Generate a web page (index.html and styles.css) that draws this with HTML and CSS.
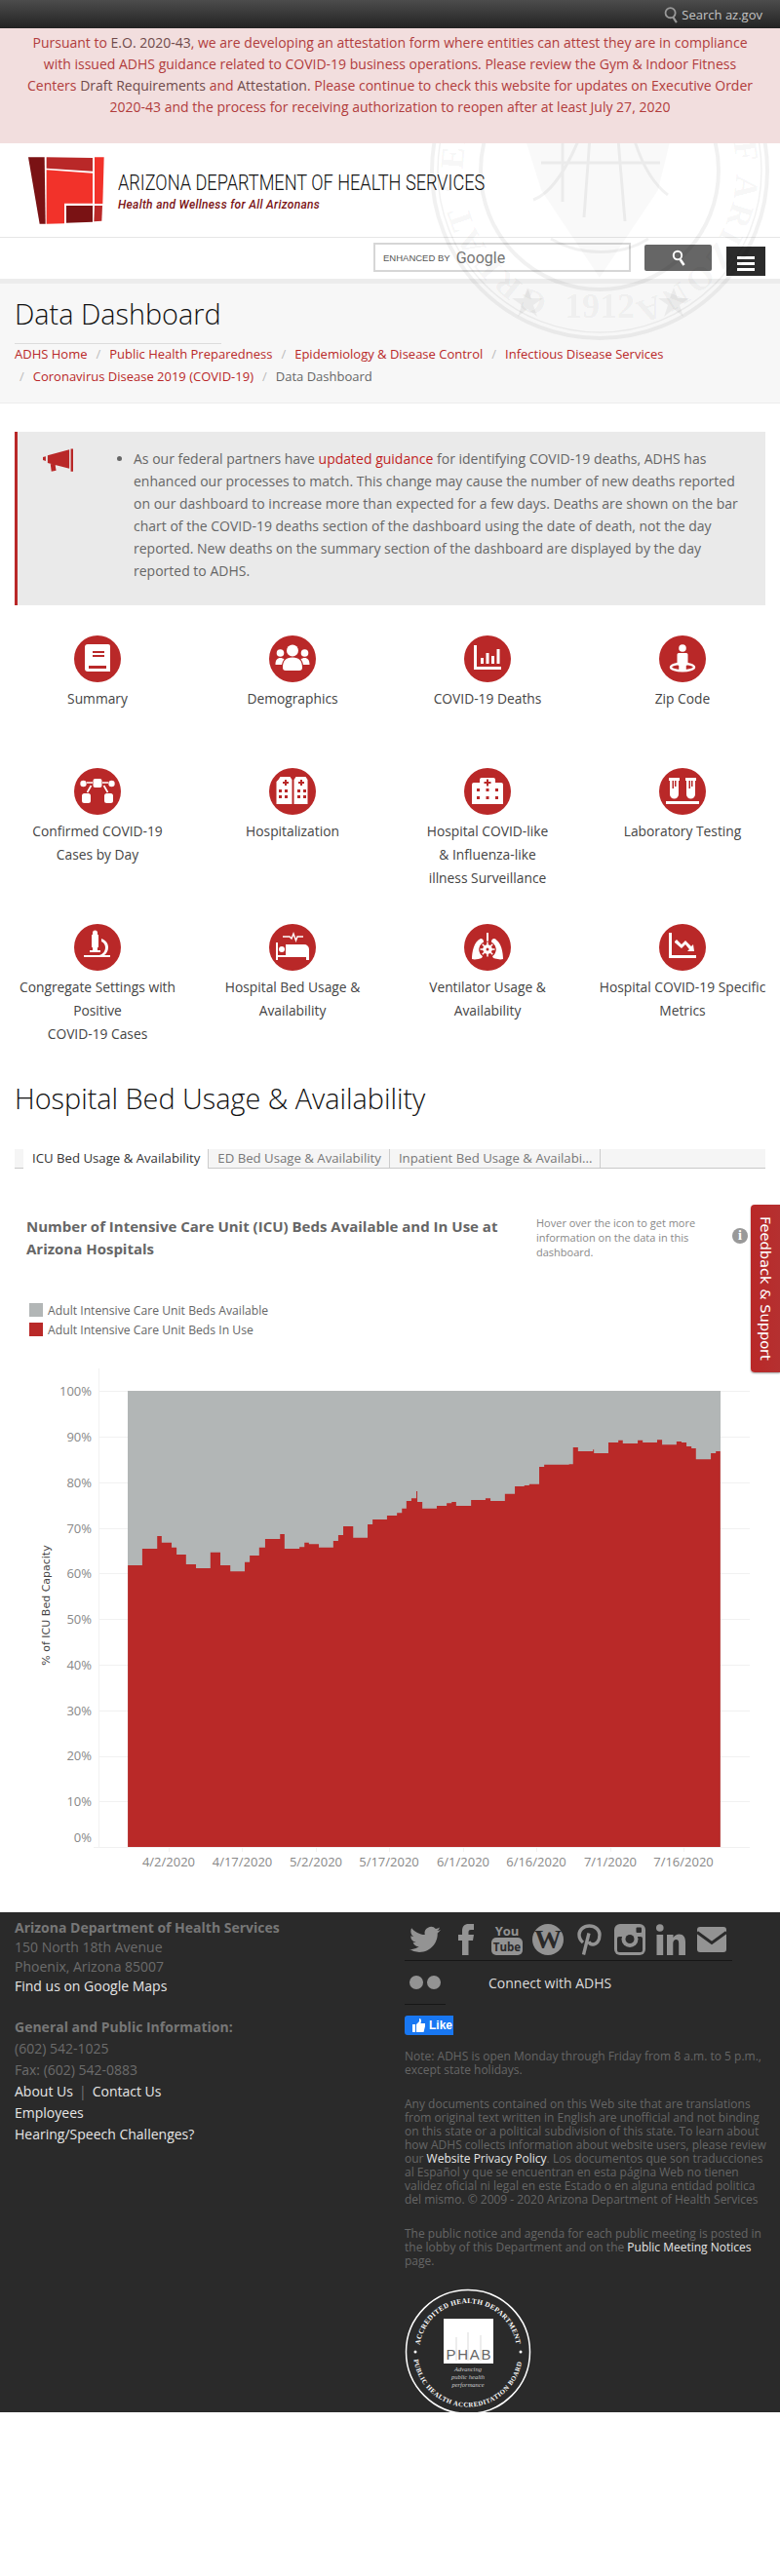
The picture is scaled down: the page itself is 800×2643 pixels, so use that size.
FILE: index.html
```html
<!DOCTYPE html>
<html lang="en">
<head>
    <meta charset="UTF-8">
    <title>Data Dashboard</title>
    <link rel="stylesheet" href="styles.css">
</head>
<body>
<div class="page">

    <div class="topbar">
        <svg class="topbar-icon" viewBox="0 0 16 20"><circle cx="7" cy="8" r="5.6" fill="none" stroke="#999" stroke-width="2"/><path d="M10 13l4 6" stroke="#999" stroke-width="2.4"/></svg>
        <span>Search az.gov</span>
    </div>

    <div class="alert">
        Pursuant to <a>E.O. 2020-43</a>, we are developing an attestation form where entities can attest they are in compliance<br>
        with issued ADHS guidance related to COVID-19 business operations. Please review the Gym &amp; Indoor Fitness<br>
        Centers <a>Draft Requirements</a> and <a>Attestation</a>. Please continue to check this website for updates on Executive Order<br>
        2020-43 and the process for receiving authorization to reopen after at least July 27, 2020
    </div>

    <div class="brand">
        <div class="masthead">
            <svg class="logo" viewBox="87 93 234 207">
                <polygon fill="#7a1214" points="87,94 137,94 140,299 122,299"/>
                <polygon fill="#b92828" points="143,94 285,96 285,137 143,128"/>
                <polygon fill="#f2322a" points="143,133 285,143 285,236 198,236 198,298 143,299"/>
                <polygon fill="#7a1214" points="204,243 285,243 285,293 204,296"/>
                <polygon fill="#f2322a" points="291,94 320,94 316,237 291,237"/>
                <polygon fill="#b92828" points="291,243 315,243 313,290 289,292"/>
            </svg>
            <div class="wordmark">
                <div class="wordmark-name">ARIZONA DEPARTMENT OF HEALTH SERVICES</div>
                <div class="wordmark-tag">Health and Wellness for All Arizonans</div>
            </div>
        </div>

        <div class="searchrow">
            <div class="gsearch"><span class="gsearch-by">ENHANCED BY</span><span class="gsearch-logo">Google</span></div>
            <div class="gbutton"><svg width="14" height="18" viewBox="0 0 14 18"><circle cx="6" cy="6" r="4.2" fill="none" stroke="#fff" stroke-width="2"/><path d="M8.5 10l4 6" stroke="#fff" stroke-width="2.6"/></svg></div>
            <div class="burger"><i></i><i></i><i></i></div>
        </div>

        <div class="titlearea">
            <h1>Data Dashboard</h1>
            <div class="crumbs">
                <a>ADHS Home</a><s>/</s><a>Public Health Preparedness</a><s>/</s><a>Epidemiology &amp; Disease Control</a><s>/</s><a>Infectious Disease Services</a><br>
                <s class="first">/</s><a>Coronavirus Disease 2019 (COVID-19)</a><s>/</s><span>Data Dashboard</span>
            </div>
        </div>

        <!-- faint state seal behind the header -->
        <svg class="seal" viewBox="0 0 360 360">
            <defs><path id="sealArc" d="M180 320a140 140 0 1 1 .1 0"/></defs>
            <g fill="none" stroke="#000" stroke-opacity=".055">
                <circle cx="180" cy="180" r="172" stroke-width="4"/>
                <circle cx="180" cy="180" r="166" stroke-width="1.5"/>
                <circle cx="180" cy="180" r="122" stroke-width="4"/>
                <path stroke-width="3" d="M98 150l40-60 24 26 26-44 34 38 38 24M112 210c22-8 38-40 50-70M250 205c-16-12-28-34-36-62M130 250c30 18 72 18 100 0M142 120v92M172 118l-8 110M196 112l10 120M120 172h122"/>
            </g>
            <text class="seal-ring"><textPath href="#sealArc" startOffset="6%" textLength="790">GREAT SEAL OF THE STATE OF ARIZONA</textPath></text>
            <g fill="#000" fill-opacity=".05">
                <polygon fill-opacity=".025" points="95,120 130,70 160,90 190,55 225,85 262,110 240,200 180,290 120,200"/>
                <text class="seal-year" x="180" y="331" text-anchor="middle">1912</text>
                <polygon points="106,300 110,311 122,311 112,318 116,330 106,322 96,330 100,318 90,311 102,311"/>
                <polygon points="256,300 260,311 272,311 262,318 266,330 256,322 246,330 250,318 240,311 252,311"/>
            </g>
        </svg>
    </div>

    <div class="notice">
        <svg class="notice-icon" viewBox="0 0 32 24"><path fill="#b92828" d="M0 9l3-1v5l-3-1zM5 7L28 1v20L5 15zM8 16l5 1 1 6-5 1zM29.500 0H32v24h-2.500z"/></svg>
        <ul>
            <li>As our federal partners have <a>updated guidance</a> for identifying COVID-19 deaths, ADHS has enhanced our processes to match. This change may cause the number of new deaths reported on our dashboard to increase more than expected for a few days. Deaths are shown on the bar chart of the COVID-19 deaths section of the dashboard using the date of death, not the day reported. New deaths on the summary section of the dashboard are displayed by the day reported to ADHS.</li>
        </ul>
    </div>

    <div class="tiles">
        <div class="tile">
            <svg viewBox="0 0 48 48"><circle cx="24" cy="24" r="24" fill="#b92828"/><path fill="#fff" d="M14 9h21a2 2 0 0 1 2 2v26H14a3 3 0 0 1-3-3V12a3 3 0 0 1 3-3z"/><path fill="#b92828" d="M19 16h12v2H19zM19 20h12v2H19zM15 31h18v3H15z"/></svg>
            <p>Summary</p>
        </div>
        <div class="tile">
            <svg viewBox="0 0 48 48"><circle cx="24" cy="24" r="24" fill="#b92828"/><g fill="#fff"><circle cx="24" cy="15.500" r="6"/><circle cx="11.500" cy="18" r="3.800"/><circle cx="36.500" cy="18" r="3.800"/><path d="M6.500 30c0-5 2-7 5-7 1.500 0 3 .5 4 1.500-1.500 1.500-2 3.500-2.500 5.500zM41.500 30c0-5-2-7-5-7-1.500 0-3 .5-4 1.500 1.500 1.500 2 3.500 2.500 5.500zM14 33c0-7 3-10.500 10-10.500S34 26 34 33c0 2-1 3-3 3H17c-2 0-3-1-3-3z"/></g></svg>
            <p>Demographics</p>
        </div>
        <div class="tile">
            <svg viewBox="0 0 48 48"><circle cx="24" cy="24" r="24" fill="#b92828"/><path fill="#fff" d="M10 10h3v22h25v3H10zM17 23h3v6h-3zM22.500 18h3v11h-3zM28 21h3v8h-3zM33.500 14h3v15h-3z"/></svg>
            <p>COVID-19 Deaths</p>
        </div>
        <div class="tile">
            <svg viewBox="0 0 48 48"><circle cx="24" cy="24" r="24" fill="#b92828"/><g fill="#fff"><circle cx="24" cy="13" r="3.800"/><path d="M20 18h8a1.500 1.500 0 0 1 1.500 1.500V30l-2 1v6h-7v-6l-2-1V19.500A1.500 1.500 0 0 1 20 18z"/></g><ellipse cx="24" cy="32.500" rx="12" ry="3.800" fill="none" stroke="#fff" stroke-width="2.400"/><path fill="#fff" d="M20.500 28h7v8h-7z"/></svg>
            <p>Zip Code</p>
        </div>

        <div class="tile">
            <svg viewBox="0 0 48 48"><circle cx="24" cy="24" r="24" fill="#b92828"/><g fill="#fff"><rect x="19.500" y="11" width="9" height="9" rx="2"/><circle cx="9.500" cy="16" r="3.200"/><circle cx="38.500" cy="16" r="3.200"/><rect x="8" y="26" width="9" height="10" rx="2.500"/><rect x="31" y="26" width="9" height="10" rx="2.500"/></g><path fill="none" stroke="#fff" stroke-width="1.700" d="M13 15h6M35 15h-6M17.500 18l-4 7M30.500 18l4 7"/></svg>
            <p>Confirmed COVID-19<br>Cases by Day</p>
        </div>
        <div class="tile">
            <svg viewBox="0 0 48 48"><circle cx="24" cy="24" r="24" fill="#b92828"/><path fill="#fff" d="M9 12l2-3h10l2 3v25H7V14zM25 12l2-3h10l2 3v25H25z" transform="translate(.5)"/><path fill="#b92828" d="M14 14h2v-2h2v2h2v2h-2v2h-2v-2h-2zM30 14h2v-2h2v2h2v2h-2v2h-2v-2h-2zM10 22h3v3h-3zM16 22h3v3h-3zM10 28h3v3h-3zM16 28h3v3h-3zM29 22h3v3h-3zM35 22h3v3h-3zM29 28h3v3h-3zM35 28h3v3h-3z"/></svg>
            <p>Hospitalization</p>
        </div>
        <div class="tile">
            <svg viewBox="0 0 48 48"><circle cx="24" cy="24" r="24" fill="#b92828"/><path fill="#fff" d="M16 12a2 2 0 0 1 2-2h12a2 2 0 0 1 2 2v3h6a2 2 0 0 1 2 2v20H8V17a2 2 0 0 1 2-2h6z"/><path fill="#b92828" d="M23 11.500h2v2.500h2.500v2H25v2.500h-2V16h-2.500v-2H23zM13 21h3v3h-3zM22.500 21h3v3h-3zM32 21h3v3h-3zM13 29h3v3h-3zM22.500 29h3v3h-3zM32 29h3v3h-3z"/></svg>
            <p>Hospital COVID-like<br>&amp; Influenza-like<br>illness Surveillance</p>
        </div>
        <div class="tile">
            <svg viewBox="0 0 48 48"><circle cx="24" cy="24" r="24" fill="#b92828"/><path fill="#fff" d="M10 10h11v3h-1v14a4.500 4.500 0 0 1-9 0V13h-1zM27 10h11v3h-1v14a4.500 4.500 0 0 1-9 0V13h-1zM7 34h34v3H7z"/><path fill="#b92828" d="M13.500 13h1.500v8h-1.500zM16 13h1.500v6H16zM30.500 13H32v8h-1.500zM33 13h1.500v6H33z"/></svg>
            <p>Laboratory Testing</p>
        </div>

        <div class="tile">
            <svg viewBox="0 0 48 48"><circle cx="24" cy="24" r="24" fill="#b92828"/><path fill="#fff" d="M19 9a2.500 2.500 0 0 1 5 0v2h1v13h-1v3h-5v-3h-1V11h1zM28 15c4.500 1.500 7 5 7 9 0 3.500-1.500 6-4 8h6v2H10v-2h16c3.500-1 6-4 6-8 0-2.500-1.500-5-4-6zM16 27h11v2H16z"/></svg>
            <p>Congregate Settings with<br>Positive<br>COVID-19 Cases</p>
        </div>
        <div class="tile">
            <svg viewBox="0 0 48 48"><circle cx="24" cy="24" r="24" fill="#b92828"/><path fill="#fff" d="M7 19h2v13h8V21h19a5 5 0 0 1 5 5v11h-3v-3H9v3H7z"/><circle cx="13" cy="26" r="3" fill="#fff"/><path fill="none" stroke="#fff" stroke-width="1.400" d="M14 13h7l2 2 2-5 2.500 7 1.500-4h6"/></svg>
            <p>Hospital Bed Usage &amp;<br>Availability</p>
        </div>
        <div class="tile">
            <svg viewBox="0 0 48 48"><circle cx="24" cy="24" r="24" fill="#b92828"/><path fill="#fff" d="M23 9h2v11h-2zM17 15c1.500 0 3 1 3 3v1c-2 1-4 3-4.500 6-.5 3 .5 6 3.500 8l-1 2c-3 1-7 2-10 1 0-7 2-18 9-21zM31 15c-1.500 0-3 1-3 3v1c2 1 4 3 4.500 6 .5 3-.5 6-3.500 8l1 2c3 1 7 2 10 1 0-7-2-18-9-21z"/><circle cx="24" cy="26" r="8.500" fill="#b92828"/><path fill="none" stroke="#fff" stroke-width="1.500" d="M24 18.500v15M16.500 26h15M18.700 20.700l10.600 10.600M29.300 20.700L18.700 31.300"/><circle cx="24" cy="26" r="4.800" fill="#fff"/><circle cx="24" cy="26" r="1.500" fill="#b92828"/></svg>
            <p>Ventilator Usage &amp;<br>Availability</p>
        </div>
        <div class="tile">
            <svg viewBox="0 0 48 48"><circle cx="24" cy="24" r="24" fill="#b92828"/><path fill="#fff" d="M10 9h3v23h25v3H10zM16 18l2-2 5 5 4-4 6 6 2-2 1 7h-7l2-2-4-5-4 4-7-6z"/></svg>
            <p>Hospital COVID-19 Specific<br>Metrics</p>
        </div>
    </div>

    <h2>Hospital Bed Usage &amp; Availability</h2>

    <div class="tabs">
        <div class="tab active">ICU Bed Usage &amp; Availability</div>
        <div class="tab">ED Bed Usage &amp; Availability</div>
        <div class="tab">Inpatient Bed Usage &amp; Availabi...</div>
    </div>

    <div class="vizhead">
        <div class="vizhead-title">Number of Intensive Care Unit (ICU) Beds Available and In Use at Arizona Hospitals</div>
        <div class="vizhead-hint">Hover over the icon to get more information on the data in this dashboard.</div>
        <div class="vizhead-info">i</div>
    </div>

    <div class="legend">
        <div class="legend-row"><i class="swatch-free"></i>Adult Intensive Care Unit Beds Available</div>
        <div class="legend-row"><i class="swatch-used"></i>Adult Intensive Care Unit Beds In Use</div>
    </div>

    <svg class="chart" width="800" height="530" viewBox="0 0 800 530">
        <g stroke="#f1f1f1" stroke-width="1">
            <path d="M102 27.500H769M102 74.500H769M102 121.500H769M102 168.500H769M102 214.500H769M102 261.500H769M102 308.500H769M102 355.500H769M102 402.500H769M102 448.500H769M96 495.500H769M101.500 4V495"/>
            <path d="M173.500 495v5M248.500 495v5M324.500 495v5M399.500 495v5M475.500 495v5M550.500 495v5M626.500 495v5M701.500 495v5"/>
        </g>
        <rect x="131" y="27" width="608" height="468" fill="#b2b6b6"/>
        <g transform="scale(.5102 .35714)">
            <path fill="#b92928" d="M257 1386V577H286V529H316V493H325V512H345V526H355V546H374V574H394V585H423V540H443V577H463V594H492V568H502V549H521V526H533V501H563V487H572V529H602V524H612V512H621V516H641V526H670V507H680V490H690V465H710V498H739V459H749V445H778V434H798V426H808V414H817V392H827V384H837V364H839V395H849V414H878V406H898V398H908V395H917V406H947V389H976V384H986V392H1015V372H1035V350H1054V347H1064V344H1084V294H1094V288H1144V286H1152V238H1162V249H1192V244H1194V255H1223V224H1243V218H1252V227H1282V218H1292V224H1321V216H1331V230H1360V221H1370V224H1380V235H1390V241H1399V272H1429V255H1439V249H1448V1386Z"/>
        </g>
        <g class="tick tick-y">
            <text x="94" y="31.500">100%</text><text x="94" y="78.500">90%</text><text x="94" y="125.500">80%</text><text x="94" y="172.500">70%</text><text x="94" y="218.500">60%</text><text x="94" y="265.500">50%</text><text x="94" y="312.500">40%</text><text x="94" y="359.500">30%</text><text x="94" y="405.500">20%</text><text x="94" y="452.500">10%</text><text x="94" y="490">0%</text>
        </g>
        <g class="tick tick-x">
            <text x="173" y="515">4/2/2020</text><text x="248.500" y="515">4/17/2020</text><text x="324" y="515">5/2/2020</text><text x="399" y="515">5/17/2020</text><text x="475" y="515">6/1/2020</text><text x="550" y="515">6/16/2020</text><text x="626" y="515">7/1/2020</text><text x="701" y="515">7/16/2020</text>
        </g>
        <text class="axis-title" transform="translate(51 247) rotate(-90)">% of ICU Bed Capacity</text>
    </svg>

    <div class="footer">
        <div class="footer-left">
            <div class="addr">
                <b>Arizona Department of Health Services</b><br>
                150 North 18th Avenue<br>
                Phoenix, Arizona 85007<br>
                <a>Find us on Google Maps</a>
            </div>
            <b class="footer-head">General and Public Information:</b>
            <div class="footer-line">(602) 542-1025</div>
            <div class="footer-line">Fax: (602) 542-0883</div>
            <div class="footer-line"><a>About Us</a><span class="pipe">|</span><a>Contact Us</a></div>
            <div class="footer-line"><a>Employees</a></div>
            <div class="footer-line"><a>Hearing/Speech Challenges?</a></div>
        </div>
        <div class="footer-right">
            <div class="social">
                <svg class="s-tw" viewBox="0 0 24 24"><path d="M23.950 4.570a10 10 0 0 1-2.820.770 4.960 4.960 0 0 0 2.160-2.720c-.950.550-2.010.960-3.120 1.190a4.920 4.920 0 0 0-8.380 4.480C7.690 8.090 4.070 6.130 1.640 3.160a4.820 4.820 0 0 0-.660 2.470c0 1.710.870 3.210 2.190 4.100a4.900 4.900 0 0 1-2.230-.620v.060a4.920 4.920 0 0 0 3.950 4.830 5 5 0 0 1-2.210.080 4.940 4.940 0 0 0 4.600 3.420A9.870 9.870 0 0 1 0 19.540a14 14 0 0 0 7.560 2.210c9.050 0 14-7.500 14-13.980 0-.210 0-.420-.020-.630a9.940 9.940 0 0 0 2.460-2.550z"/></svg>
                <svg class="s-fb" viewBox="0 0 16 32"><path d="M4 32V17H0v-6h4V7c0-4.500 2.500-7 6.500-7H16v6h-3c-1.800 0-2.500.8-2.500 2.500V11H16l-1 6h-4.500v15z"/></svg>
                <svg class="s-yt" viewBox="0 0 32 32"><text class="yt-you" x="16" y="12" text-anchor="middle">You</text><rect y="14" width="32" height="18" rx="5"/><text class="yt-tube" x="16" y="27.500" text-anchor="middle">Tube</text></svg>
                <svg class="s-wp" viewBox="0 0 32 32"><circle cx="16" cy="16" r="16"/><text class="wp-w" x="16" y="25" text-anchor="middle">W</text></svg>
                <svg class="s-pin" viewBox="0 0 25 32"><path fill="none" stroke="#939393" stroke-width="3.400" d="M6 19C3 16.500 2 14 2 11 2 6 6.500 2 12.500 2S23 6 23 11c0 6-3 10-7 10-2 0-3.500-1-4-3"/><path fill="none" stroke="#939393" stroke-width="3.400" d="M12 9.500L6.500 31.500"/></svg>
                <svg class="s-ig" viewBox="0 0 32 32"><rect width="32" height="32" rx="6"/><rect x="3" y="13" width="26" height="16" rx="2" fill="#2a2a2a"/><circle cx="16" cy="15.500" r="8.500"/><circle cx="16" cy="15.500" r="4.500" fill="#2a2a2a"/><rect x="22.500" y="3.500" width="5.500" height="5.500" rx="1" fill="#2a2a2a"/></svg>
                <svg class="s-in" viewBox="0 0 30 32"><circle cx="3.800" cy="4" r="3.800"/><path d="M.5 11h6.700v21H.5zM11 11h6.500v3c1.500-2.300 3.500-3.500 6-3.500 4.500 0 6.500 3 6.500 8V32h-6.800V20c0-2.500-.7-4-2.700-4-2.200 0-3.200 1.800-3.200 4v12H11z"/></svg>
                <svg class="s-mail" viewBox="0 0 30 26"><rect width="30" height="26" rx="3"/><path fill="none" stroke="#2a2a2a" stroke-width="3" d="M0 5.500l15 11 15-11"/></svg>
            </div>
            <div class="connect">
                <div class="flickr"><i></i><i></i></div>
                <span>Connect with ADHS</span>
            </div>
            <div class="shortrule"></div>
            <div class="like"><svg width="13" height="14" viewBox="0 0 13 14"><path fill="#fff" d="M0 6h3v8H0zM4 6l3-3V0c2 0 2.500 2 1.500 5H13v3l-1.500 6H4z"/></svg><span>Like</span></div>
            <p class="small">Note: ADHS is open Monday through Friday from 8 a.m. to 5 p.m., except state holidays.</p>
            <p class="small">Any documents contained on this Web site that are translations from original text written in English are unofficial and not binding on this state or a political subdivision of this state. To learn about how ADHS collects information about website users, please review our <a>Website Privacy Policy</a>. Los documentos que son traducciones al Español y que se encuentran en esta página Web no tienen validez oficial ni legal en este Estado o en alguna entidad politica del mismo. © 2009 - 2020 Arizona Department of Health Services</p>
            <p class="small">The public notice and agenda for each public meeting is posted in the lobby of this Department and on the <a>Public Meeting Notices</a> page.</p>
            <svg class="phab" width="130" height="130" viewBox="0 0 130 130">
                <defs>
                    <path id="phabTop" d="M15.500 58A50 50 0 0 1 114.500 58"/>
                    <path id="phabBottom" d="M9.500 73A56 56 0 0 0 120.500 73"/>
                </defs>
                <circle cx="65" cy="65" r="63.500" fill="none" stroke="#fff" stroke-width="1.500"/>
                <text class="phab-ring"><textPath href="#phabTop" textLength="142">ACCREDITED HEALTH DEPARTMENT</textPath></text>
                <text class="phab-ring phab-ring-low"><textPath href="#phabBottom" textLength="158">PUBLIC HEALTH ACCREDITATION BOARD</textPath></text>
                <circle cx="11" cy="65" r="1.500" fill="#fff"/><circle cx="119" cy="65" r="1.500" fill="#fff"/>
                <rect x="40" y="31" width="51" height="46" fill="#fff"/>
                <path d="M53 50v24M65 45v29M78 48v26" stroke="#ccc" stroke-width=".7"/>
                <text class="phab-name" x="65.500" y="73" text-anchor="middle" textLength="46">PHAB</text>
                <text class="phab-tag" x="65" y="85" text-anchor="middle">Advancing</text>
                <text class="phab-tag" x="65" y="93" text-anchor="middle">public health</text>
                <text class="phab-tag" x="65" y="101" text-anchor="middle">performance</text>
            </svg>
        </div>
    </div>

    <div class="feedback">Feedback &amp; Support</div>
</div>
</body>
</html>
```

FILE: styles.css
```css
body {
    margin: 0;
    font-family: 'Open Sans', sans-serif;
    color: #333;
    background: #fff;
}

.page {
    position: relative;
    width: 800px;
    height: 2643px;
    overflow: hidden;
}

a {
    color: #b92828;
}

.topbar {
    height: 29px;
    background: linear-gradient(#4c4c4c, #232323);
    display: flex;
    justify-content: flex-end;
    align-items: center;
    gap: 3px;
    padding-right: 18px;
    color: #c4c4c4;
    font-size: 13px;
}

.topbar-icon {
    width: 15px;
    height: 18px;
}

.alert {
    height: 118px;
    box-sizing: border-box;
    padding-top: 4px;
    background: #f2dede;
    color: #b13c3c;
    font-size: 14px;
    line-height: 22px;
    text-align: center;
}

.alert a {
    color: #6f4a4a;
}

.brand {
    position: relative;
    overflow: hidden;
}

.masthead {
    height: 96px;
    border-bottom: 1px solid #e6e6e6;
    display: flex;
    align-items: flex-start;
}

.logo {
    width: 78px;
    height: 69px;
    margin: 14px 0 0 29px;
}

.wordmark {
    margin: 28px 0 0 14px;
}

.wordmark-name {
    width: 373px;
    font-family: 'Roboto', sans-serif;
    font-size: 22px;
    font-weight: 300;
    line-height: 26px;
    color: #111;
    transform: scaleX(.825);
    transform-origin: left;
    white-space: nowrap;
}

.wordmark-tag {
    margin-top: 2px;
    font-family: 'Roboto', sans-serif;
    font-size: 12px;
    font-weight: 500;
    font-style: italic;
    letter-spacing: .3px;
    color: #7a1214;
}

.searchrow {
    height: 42px;
    display: flex;
    justify-content: flex-end;
    align-items: flex-start;
    padding-right: 15px;
}

.gsearch {
    width: 252px;
    height: 26px;
    margin-top: 5px;
    border: 2px solid #d6d6d6;
    display: flex;
    align-items: center;
    padding-left: 8px;
    background: #fff;
}

.gsearch-by {
    font-family: 'Liberation Sans', sans-serif;
    font-size: 9.5px;
    color: #555;
    margin-right: 6px;
}

.gsearch-logo {
    font-family: 'Roboto', sans-serif;
    font-size: 16px;
    color: #757575;
}

.gbutton {
    width: 69px;
    height: 27px;
    margin: 7px 0 0 14px;
    border-radius: 2px;
    background: #666;
    display: flex;
    justify-content: center;
    align-items: center;
}

.burger {
    width: 40px;
    height: 30px;
    margin: 9px 0 0 15px;
    box-sizing: border-box;
    padding: 10px 11px 0;
    background: #2b2b2b;
}

.burger i {
    display: block;
    height: 3px;
    margin-bottom: 3px;
    background: #fff;
}

.titlearea {
    height: 128px;
    box-sizing: border-box;
    border-top: 5px solid #ececec;
    border-bottom: 1px solid #ececec;
    background: #f7f7f7;
    padding: 0 15px;
}

h1 {
    display: inline-block;
    margin: 9px 0 0;
    padding-bottom: 8px;
    border-bottom: 1px solid #dcdcdc;
    font-size: 28.800px;
    font-weight: 300;
    line-height: 44px;
    color: #111;
}

.crumbs {
    margin-top: -1px;
    font-size: 13px;
    line-height: 23px;
    color: #666;
}

.crumbs s {
    text-decoration: none;
    color: #bbb;
    margin: 0 9px;
}

.crumbs s.first {
    margin-left: 5px;
}

.seal {
    position: absolute;
    left: 435px;
    top: -152px;
    width: 360px;
    height: 360px;
    pointer-events: none;
}

.seal-ring {
    font-family: 'Liberation Serif', serif;
    font-size: 34px;
    font-weight: bold;
    fill: #000;
    fill-opacity: .05;
}

.seal-year {
    font-family: 'Liberation Serif', serif;
    font-size: 36px;
    font-weight: bold;
}

.notice {
    position: relative;
    height: 178px;
    box-sizing: border-box;
    margin: 29px 15px 0;
    border-left: 3px solid #b92828;
    background: #eaeaea;
    padding: 16px 12px 0 119px;
    font-size: 14px;
    line-height: 23px;
    color: #666;
}

.notice a {
    color: #c01f1f;
}

.notice ul {
    margin: 0;
    padding: 0;
}

.notice-icon {
    position: absolute;
    left: 26px;
    top: 17px;
    width: 31px;
    height: 24px;
}

.tiles {
    display: grid;
    grid-template-columns: repeat(4, 200px);
    margin-top: 31px;
}

.tile {
    min-height: 136px;
    padding-bottom: 35px;
    box-sizing: border-box;
    text-align: center;
}

.tile svg {
    display: block;
    width: 48px;
    height: 48px;
    margin: 0 auto;
}

.tile p {
    margin: 5px 0 0;
    font-size: 13.800px;
    line-height: 24px;
    color: #444;
}

h2 {
    margin: -1px 0 0 15px;
    font-size: 28.800px;
    font-weight: 300;
    line-height: 40px;
    color: #111;
}

.tabs {
    display: flex;
    height: 19px;
    margin: 32px 15px 0;
    padding-left: 9px;
    background: #f5f5f5;
    border-bottom: 1px solid #c8c8c8;
}

.tab {
    height: 19px;
    padding: 0 8px 0 9px;
    border-right: 1px solid #ccc;
    font-size: 13.200px;
    line-height: 19px;
    color: #777;
    white-space: nowrap;
}

.tab.active {
    height: 20px;
    background: #fff;
    color: #333;
}

.vizhead {
    position: relative;
    height: 46px;
    margin-top: 48px;
    padding-left: 27px;
}

.vizhead-title {
    width: 500px;
    font-size: 15px;
    font-weight: 700;
    line-height: 23px;
    color: #666;
}

.vizhead-hint {
    position: absolute;
    left: 550px;
    top: 0;
    width: 175px;
    font-size: 11px;
    line-height: 15px;
    color: #888;
}

.vizhead-info {
    position: absolute;
    left: 751px;
    top: 13px;
    width: 16px;
    height: 16px;
    border-radius: 50%;
    background: #999;
    color: #fff;
    font-family: 'Liberation Serif', serif;
    font-size: 14px;
    font-weight: bold;
    line-height: 16px;
    text-align: center;
}

.legend {
    margin: 44px 0 0 30px;
    font-size: 12.200px;
    color: #666;
}

.legend-row {
    display: flex;
    align-items: center;
    gap: 5px;
    height: 14px;
    margin-bottom: 6px;
}

.legend-row i {
    width: 14px;
    height: 14px;
}

.swatch-free {
    background: #b2b6b6;
}

.swatch-used {
    background: #b92928;
}

.chart {
    display: block;
    margin-top: 29px;
}

.tick text {
    font-family: 'Open Sans', sans-serif;
    font-size: 13px;
    fill: #888;
}

.tick-y text {
    text-anchor: end;
}

.tick-x text {
    text-anchor: middle;
}

.axis-title {
    font-family: 'DejaVu Sans', sans-serif;
    font-size: 11px;
    fill: #444;
    text-anchor: middle;
}

.footer {
    display: flex;
    height: 513px;
    margin-top: 32px;
    background: #2a2a2a;
    color: #6c6c6c;
    font-size: 14px;
}

.footer a {
    color: #e6e6e6;
}

.footer-left {
    width: 400px;
    box-sizing: border-box;
    padding: 6px 0 0 15px;
}

.addr {
    line-height: 20px;
}

.footer b {
    color: #777;
}

.footer-head {
    display: block;
    margin-top: 21px;
    line-height: 22px;
}

.footer-line {
    line-height: 22px;
}

.pipe {
    margin: 0 6px;
    color: #777;
}

.footer-right {
    width: 372px;
    padding-left: 15px;
}

.social {
    display: flex;
    align-items: flex-start;
    width: 336px;
    height: 37px;
    padding-top: 12px;
    border-bottom: 1px solid #171717;
}

.social svg {
    display: block;
    height: 32px;
    fill: #939393;
    overflow: visible;
}

.s-tw {
    width: 32px;
    margin-left: 5px;
}

.s-fb {
    width: 16px;
    margin-left: 18px;
}

.s-yt {
    width: 32px;
    margin-left: 18px;
}

.s-wp {
    width: 32px;
    margin-left: 10px;
}

.s-pin {
    width: 25px;
    margin-left: 14px;
}

.s-ig {
    width: 32px;
    margin-left: 13px;
}

.s-in {
    width: 30px;
    margin-left: 11px;
}

.social .s-mail {
    width: 30px;
    height: 26px;
    margin: 3px 0 0 12px;
}

.yt-you {
    font-family: 'Open Sans', sans-serif;
    font-size: 13px;
    font-weight: 700;
    fill: #939393;
}

.yt-tube {
    font-family: 'Open Sans', sans-serif;
    font-size: 11.500px;
    font-weight: 700;
    fill: #2a2a2a;
}

.wp-w {
    font-family: 'Liberation Serif', serif;
    font-size: 28px;
    font-weight: bold;
    fill: #2a2a2a;
}

.connect {
    display: flex;
    align-items: center;
    height: 44px;
}

.flickr {
    display: flex;
    gap: 4px;
    width: 86px;
    padding-left: 5px;
    box-sizing: border-box;
}

.flickr i {
    width: 14px;
    height: 14px;
    border-radius: 50%;
    background: #939393;
}

.connect span {
    color: #ddd;
    font-size: 14px;
}

.shortrule {
    width: 42px;
    border-top: 1px solid #171717;
}

.like {
    display: flex;
    align-items: center;
    gap: 4px;
    width: 50px;
    height: 20px;
    margin-top: 11px;
    padding-left: 8px;
    box-sizing: border-box;
    border-radius: 3px 0 0 3px;
    background: #1877f2;
    color: #fff;
    font-family: 'Liberation Sans', sans-serif;
    font-size: 12px;
    font-weight: bold;
    overflow: hidden;
}

.small {
    width: 372px;
    margin: 0 0 21px;
    font-size: 12px;
    line-height: 14px;
    color: #666;
}

.like + .small {
    margin-top: 15px;
}

.phab {
    display: block;
    margin-top: 19px;
}

.phab-ring {
    font-family: 'Liberation Serif', serif;
    font-size: 7.200px;
    font-weight: bold;
    fill: #fff;
}

.phab-ring-low {
    font-size: 6.800px;
}

.phab-name {
    font-family: 'Liberation Sans', sans-serif;
    font-size: 15px;
    fill: #666;
}

.phab-tag {
    font-family: 'Liberation Serif', serif;
    font-size: 6.500px;
    font-style: italic;
    fill: #ccc;
}

.feedback {
    position: absolute;
    right: 0;
    top: 1236px;
    width: 30px;
    height: 172px;
    box-sizing: border-box;
    border-radius: 4px 0 0 4px;
    background: linear-gradient(90deg, #b92828, #b53030);
    box-shadow: 0 1px 2px rgba(0, 0, 0, .4);
    color: #fff;
    font-family: 'DejaVu Sans', sans-serif;
    font-size: 14.600px;
    line-height: 30px;
    text-align: center;
    writing-mode: vertical-rl;
}
```
